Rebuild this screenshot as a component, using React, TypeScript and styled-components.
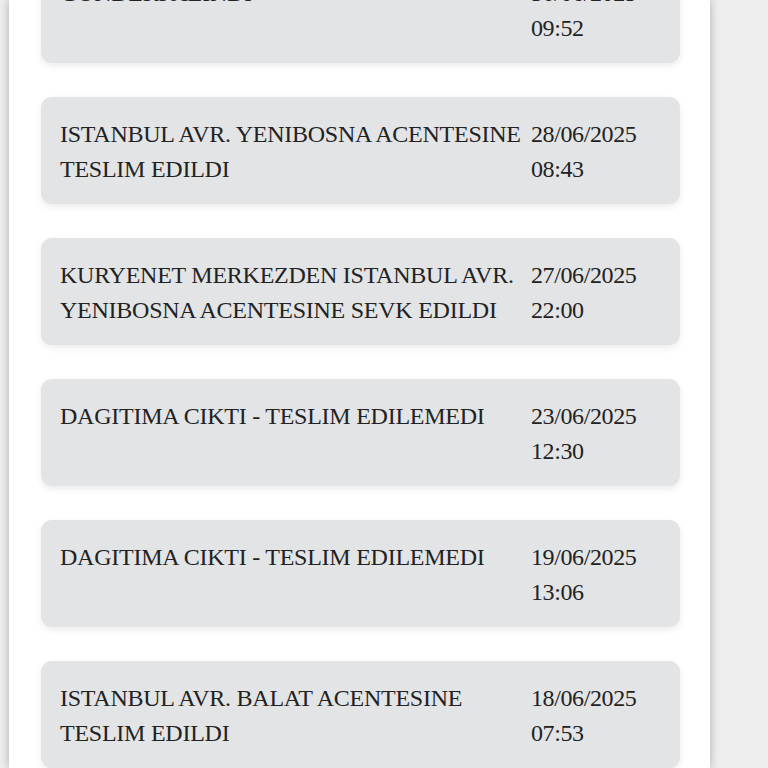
import React from "react";
import styled, { createGlobalStyle } from "styled-components";

const Global = createGlobalStyle`
  html, body {
    margin: 0;
    padding: 0;
    background: #eeeeee;
    height: 768px;
    overflow: hidden;
  }
`;

const Page = styled.div`
  display: flex;
  height: 768px;
  overflow: hidden;
`;

const Panel = styled.div`
  margin-left: 9px;
  width: 701px;
  box-sizing: border-box;
  background: #ffffff;
  padding: 0 30px 0 32px;
  box-shadow: 0 0 9px rgba(0, 0, 0, 0.28);
`;

const List = styled.div`
  display: flex;
  flex-direction: column;
  gap: 34px;
  margin-top: -44px;
`;

const Card = styled.div`
  display: grid;
  grid-template-columns: 1fr 130px;
  column-gap: 3px;
  padding: 20px 19px 17px 19px;
  background: #e3e4e6;
  border-radius: 11px;
  box-shadow: 0 3px 7px rgba(0, 0, 0, 0.08);
  font-family: "Liberation Serif", "Times New Roman", serif;
  font-size: 24px;
  letter-spacing: -0.25px;
  line-height: 35px;
  color: #222222;
`;

const Desc = styled.div``;

const When = styled.div`
  display: flex;
  flex-direction: column;
  letter-spacing: -0.4px;
`;

const events = [
  { text: "GONDERI ALINDI", date: "30/06/2025", time: "09:52" },
  { text: "ISTANBUL AVR. YENIBOSNA ACENTESINE TESLIM EDILDI", date: "28/06/2025", time: "08:43" },
  { text: "KURYENET MERKEZDEN ISTANBUL AVR. YENIBOSNA ACENTESINE SEVK EDILDI", date: "27/06/2025", time: "22:00" },
  { text: "DAGITIMA CIKTI - TESLIM EDILEMEDI", date: "23/06/2025", time: "12:30" },
  { text: "DAGITIMA CIKTI - TESLIM EDILEMEDI", date: "19/06/2025", time: "13:06" },
  { text: "ISTANBUL AVR. BALAT ACENTESINE TESLIM EDILDI", date: "18/06/2025", time: "07:53" },
  { text: "ISTANBUL AVR. BALAT ACENTESINE KABUL EDILDI", date: "17/06/2025", time: "16:20" },
];

export default function App() {
  return (
    <>
      <Global />
      <Page>
        <Panel>
          <List>
            {events.map((e, i) => (
              <Card key={i}>
                <Desc>{e.text}</Desc>
                <When>
                  <span>{e.date}</span>
                  <span>{e.time}</span>
                </When>
              </Card>
            ))}
          </List>
        </Panel>
      </Page>
    </>
  );
}
